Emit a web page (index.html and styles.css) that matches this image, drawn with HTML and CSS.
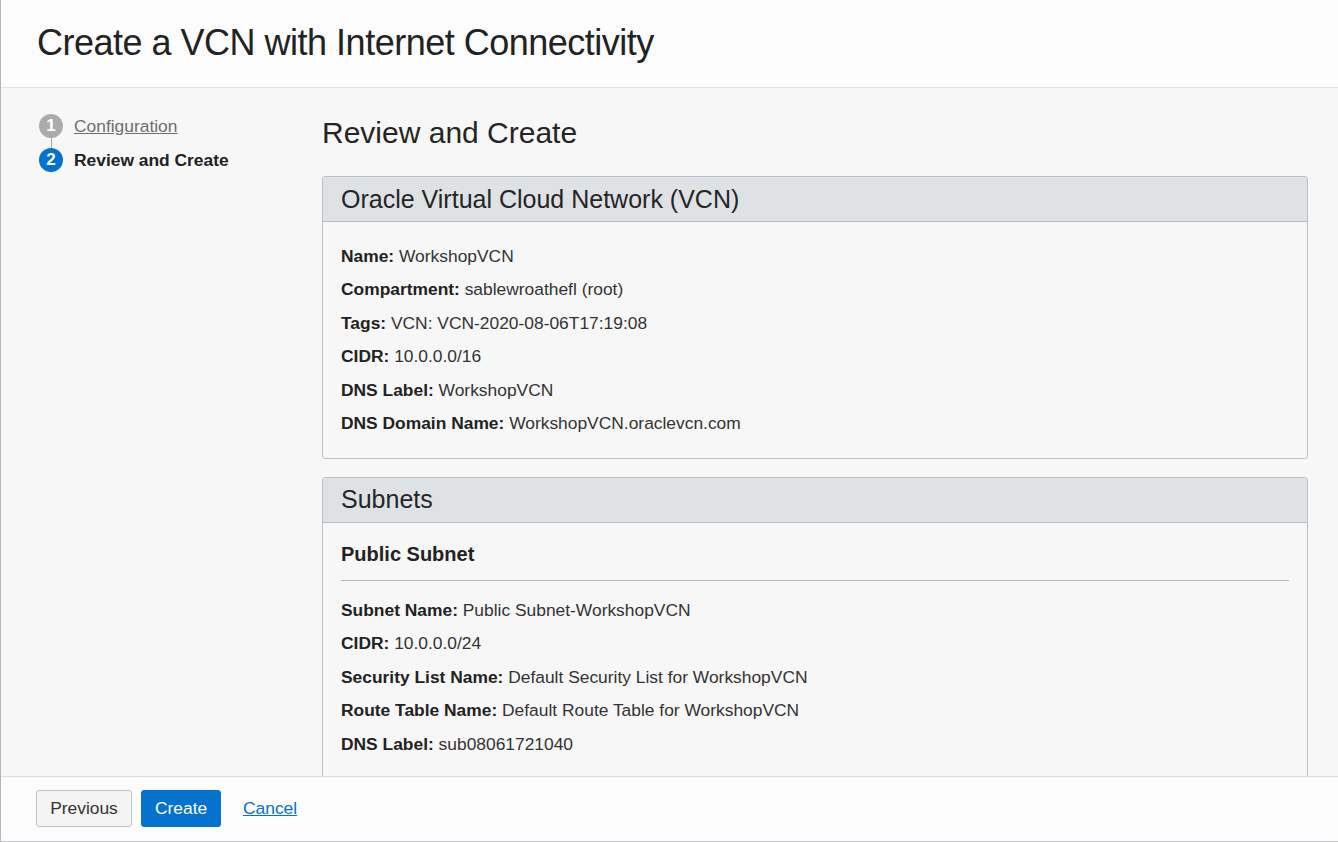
FILE: index.html
```html
<!DOCTYPE html>
<html lang="en">
<head>
<meta charset="utf-8">
<title>Create a VCN with Internet Connectivity</title>
<link rel="stylesheet" href="styles.css">
</head>
<body>
<div class="page">
  <header class="top">
    <h1 class="title">Create a VCN with Internet Connectivity</h1>
  </header>
  <div class="middle">
    <nav class="steps">
      <div class="step done">
        <span class="num">1</span>
        <a href="#" class="step-link">Configuration</a>
      </div>
      <div class="connector"></div>
      <div class="step current">
        <span class="num">2</span>
        <span class="step-label">Review and Create</span>
      </div>
    </nav>
    <main class="content">
      <h2 class="heading">Review and Create</h2>
      <section class="panel">
        <div class="panel-head">Oracle Virtual Cloud Network (VCN)</div>
        <div class="panel-body">
          <div class="row"><b>Name:</b> WorkshopVCN</div>
          <div class="row"><b>Compartment:</b> sablewroathefl (root)</div>
          <div class="row"><b>Tags:</b> VCN: VCN-2020-08-06T17:19:08</div>
          <div class="row"><b>CIDR:</b> 10.0.0.0/16</div>
          <div class="row"><b>DNS Label:</b> WorkshopVCN</div>
          <div class="row"><b>DNS Domain Name:</b> WorkshopVCN.oraclevcn.com</div>
        </div>
      </section>
      <section class="panel">
        <div class="panel-head">Subnets</div>
        <div class="panel-body">
          <div class="sub-title">Public Subnet</div>
          <div class="divider"></div>
          <div class="row"><b>Subnet Name:</b> Public Subnet-WorkshopVCN</div>
          <div class="row"><b>CIDR:</b> 10.0.0.0/24</div>
          <div class="row"><b>Security List Name:</b> Default Security List for WorkshopVCN</div>
          <div class="row"><b>Route Table Name:</b> Default Route Table for WorkshopVCN</div>
          <div class="row"><b>DNS Label:</b> sub08061721040</div>
          <div class="row">&nbsp;</div>
          <div class="row">&nbsp;</div>
        </div>
      </section>
    </main>
  </div>
  <footer class="bottom">
    <button class="btn btn-secondary">Previous</button>
    <button class="btn btn-primary">Create</button>
    <a href="#" class="cancel">Cancel</a>
  </footer>
</div>
</body>
</html>
```
FILE: styles.css
```css
* { box-sizing: border-box; }
html, body { margin: 0; padding: 0; }
body {
  font-family: "Liberation Sans", Arial, sans-serif;
  color: #252525;
  background: #f7f7f7;
}
.page {
  width: 1338px;
  height: 842px;
  display: flex;
  flex-direction: column;
  border-left: 1px solid #b5b5b5;
  border-bottom: 1px solid #bfc3c8;
  overflow: hidden;
}
.top {
  height: 88px;
  flex: none;
  background: #fcfcfc;
  border-bottom: 1px solid #e3e3e3;
  padding-left: 36px;
  display: flex;
  align-items: center;
}
.title {
  margin: 0;
  font-weight: normal;
  font-size: 36px;
  letter-spacing: -0.5px;
  color: #222;
  line-height: 44px;
  padding-bottom: 1px;
}
.middle {
  flex: 1;
  display: flex;
  overflow: hidden;
  min-height: 0;
}
.steps {
  width: 321px;
  flex: none;
  padding: 26px 0 0 38px;
}
.step {
  display: flex;
  align-items: center;
  gap: 11px;
  height: 24px;
  font-size: 17.4px;
}
.num {
  width: 24px;
  height: 24px;
  border-radius: 50%;
  color: #fff;
  font-weight: bold;
  font-size: 17px;
  display: flex;
  align-items: center;
  justify-content: center;
  flex: none;
}
.done .num { background: #ababab; }
.current .num { background: #0572ce; }
.step-link { color: #6f6f6f; text-decoration: underline; }
.step-label { font-weight: bold; color: #222; }
.connector {
  width: 1px;
  height: 10px;
  background: #a9a9a9;
  margin-left: 12px;
}
.content {
  flex: 1;
  padding: 27px 30px 0 0;
  min-width: 0;
}
.heading {
  margin: 0 0 25px;
  font-weight: normal;
  font-size: 30px;
  line-height: 36px;
  color: #252525;
}
.panel {
  border: 1px solid #b9c0c7;
  border-radius: 3px;
  margin-bottom: 18px;
  background: #f7f7f7;
}
.panel-head {
  height: 45px;
  background: #dfe2e5;
  border-bottom: 1px solid #b9c0c7;
  border-radius: 3px 3px 0 0;
  padding-left: 18px;
  font-size: 25px;
  display: flex;
  align-items: center;
  color: #252525;
}
.panel-body {
  padding: 17.75px 18px 17px;
}
.row {
  font-size: 17.4px;
  line-height: 33.5px;
  color: #333;
  white-space: nowrap;
}
.row b { color: #222; }
.sub-title {
  font-size: 20px;
  font-weight: bold;
  line-height: 26px;
  color: #222;
}
.divider {
  height: 1px;
  background: #b4bac1;
  margin: 13px 0 13.25px;
}
.bottom {
  height: 65px;
  flex: none;
  background: #fcfcfc;
  border-top: 1px solid #dcdcdc;
  padding: 13px 0 0 35px;
  display: flex;
  align-items: flex-start;
  gap: 9px;
}
.btn {
  height: 37px;
  font-family: "Liberation Sans", Arial, sans-serif;
  font-size: 17.4px;
  border-radius: 3px;
  padding: 0 13px;
  cursor: pointer;
}
.btn-secondary {
  width: 96px;
  background: #f4f4f4;
  border: 1px solid #c2c2c2;
  color: #333;
}
.btn-primary {
  width: 80px;
  background: #0572ce;
  border: 1px solid #0572ce;
  color: #fff;
}
.cancel {
  margin-left: 13px;
  color: #0572ce;
  font-size: 17.4px;
  line-height: 37px;
}
```
